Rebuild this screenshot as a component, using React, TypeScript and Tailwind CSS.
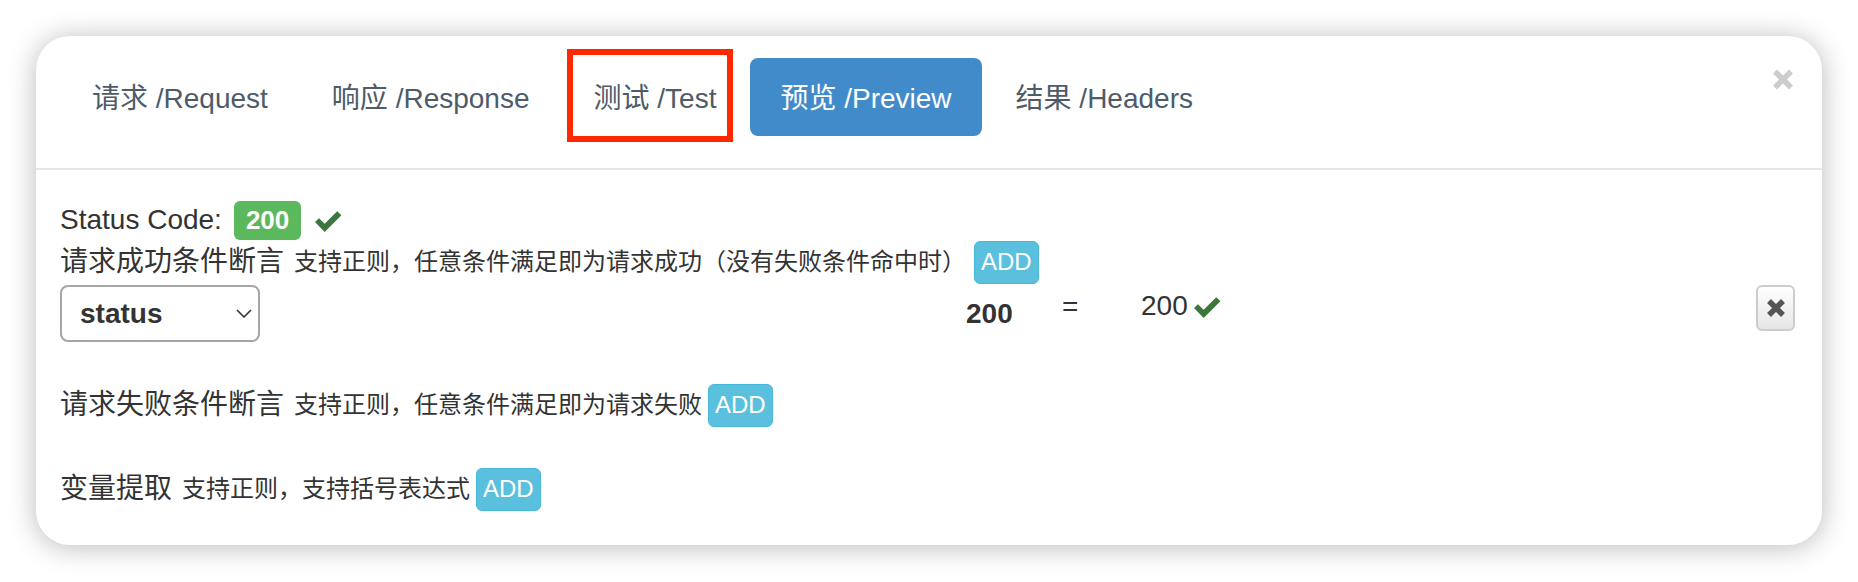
import React from 'react';

const font = "font-['Liberation_Sans','Noto_Sans_CJK_SC',sans-serif]";

const tabs = [
  { label: '请求 /Request' },
  { label: '响应 /Response' },
  { label: '测试 /Test', marked: true },
  { label: '预览 /Preview', active: true },
  { label: '结果 /Headers' },
];

const Check: React.FC<{ className?: string }> = ({ className }) => (
  <svg viewBox="0 0 26 23" className={className}>
    <polygon points="0,13.5 3.8,9.7 9.3,15.2 21.4,3.1 25.4,7 9.3,23" fill="#3c763d" />
  </svg>
);

const AddButton: React.FC = () => (
  <button
    type="button"
    className="h-[43px] px-[6px] rounded-[6px] bg-[#5bc0de] border border-[#46b8da] text-white text-[24px] leading-none"
  >
    ADD
  </button>
);

const App: React.FC = () => {
  return (
    <div className={`min-h-screen bg-white p-[36px] text-[#333] ${font}`}>
      <div className="bg-white rounded-[34px] shadow-[0_2px_28px_rgba(0,0,0,0.28)]">
        {/* header */}
        <div className="flex items-start pl-[26px] pr-[29px] pt-[22px] pb-[32px] border-b-2 border-[#e5e5e5]">
          <ul className="flex gap-[4px]">
            {tabs.map(t => (
              <li key={t.label} className="relative">
                <a
                  className={`flex items-center h-[78px] px-[30px] pt-[3px] rounded-[8px] text-[28px] leading-[40px] ${
                    t.active ? 'bg-[#428bca] text-white' : 'text-[#4e5b69]'
                  }`}
                >
                  {t.label}
                </a>
                {t.marked && (
                  <span className="absolute left-[3px] right-[13px] top-[-9px] bottom-[-6px] border-[6px] border-[#ff2600]" />
                )}
              </li>
            ))}
          </ul>
          <button type="button" className="ml-auto mt-[11px]">
            <svg viewBox="0 0 20 21" className="w-[20px] h-[21px]">
              <path d="M2 2.5 L18 18.5 M18 2.5 L2 18.5" stroke="#cccccc" strokeWidth="5.5" />
            </svg>
          </button>
        </div>

        {/* body */}
        <div className="pl-[24px] pr-[27px] pt-[30px] pb-[34px]">
          <div className="flex items-center h-[40px] text-[28px]">
            <span>Status Code:</span>
            <span className="ml-[12px] h-[39px] px-[12px] flex items-center rounded-[6px] bg-[#5cb85c] text-white font-bold text-[26px]">
              200
            </span>
            <Check className="ml-[14px] w-[27px] h-[24px]" />
          </div>

          <div className="flex items-center h-[44px]">
            <span className="text-[28px]">请求成功条件断言</span>
            <span className="ml-[10px] text-[24px]">支持正则，任意条件满足即为请求成功（没有失败条件命中时）</span>
            <span className="ml-[8px]">
              <AddButton />
            </span>
          </div>

          <div className="flex items-start mt-[1px]">
            <div className="w-[906px]">
              <div className="relative w-[200px] h-[57px] border-2 border-[#a6a6a6] rounded-[8px] flex items-center pl-[18px]">
                <span className="text-[28px] font-bold">status</span>
                <svg viewBox="0 0 16 9" className="absolute right-[6px] top-[22px] w-[16px] h-[9px]">
                  <path d="M1 1 L8 8 L15 1" fill="none" stroke="#333" strokeWidth="1.6" />
                </svg>
              </div>
            </div>
            <div className="w-[96px] mt-[9px] text-[28px] leading-[40px] font-bold">200</div>
            <div className="w-[79px] mt-[2px] text-[28px] leading-[40px]">=</div>
            <div className="flex items-center mt-[1px] h-[40px] text-[28px]">
              <span>200</span>
              <Check className="ml-[6px] w-[27px] h-[24px]" />
            </div>
            <button
              type="button"
              className="ml-auto w-[39px] h-[46px] flex items-center justify-center rounded-[6px] border-2 border-[#cccccc] bg-gradient-to-b from-[#ffffff] to-[#e6e6e6]"
            >
              <svg viewBox="0 0 20 20" className="w-[20px] h-[20px]">
                <path d="M3 3 L17 17 M17 3 L3 17" stroke="#555555" strokeWidth="5.5" />
              </svg>
            </button>
          </div>

          <div className="flex items-center h-[44px] mt-[41px]">
            <span className="text-[28px]">请求失败条件断言</span>
            <span className="ml-[10px] text-[24px]">支持正则，任意条件满足即为请求失败</span>
            <span className="ml-[6px]">
              <AddButton />
            </span>
          </div>

          <div className="flex items-center h-[44px] mt-[40px]">
            <span className="text-[28px]">变量提取</span>
            <span className="ml-[10px] text-[24px]">支持正则，支持括号表达式</span>
            <span className="ml-[6px]">
              <AddButton />
            </span>
          </div>
        </div>
      </div>
    </div>
  );
};

export default App;
